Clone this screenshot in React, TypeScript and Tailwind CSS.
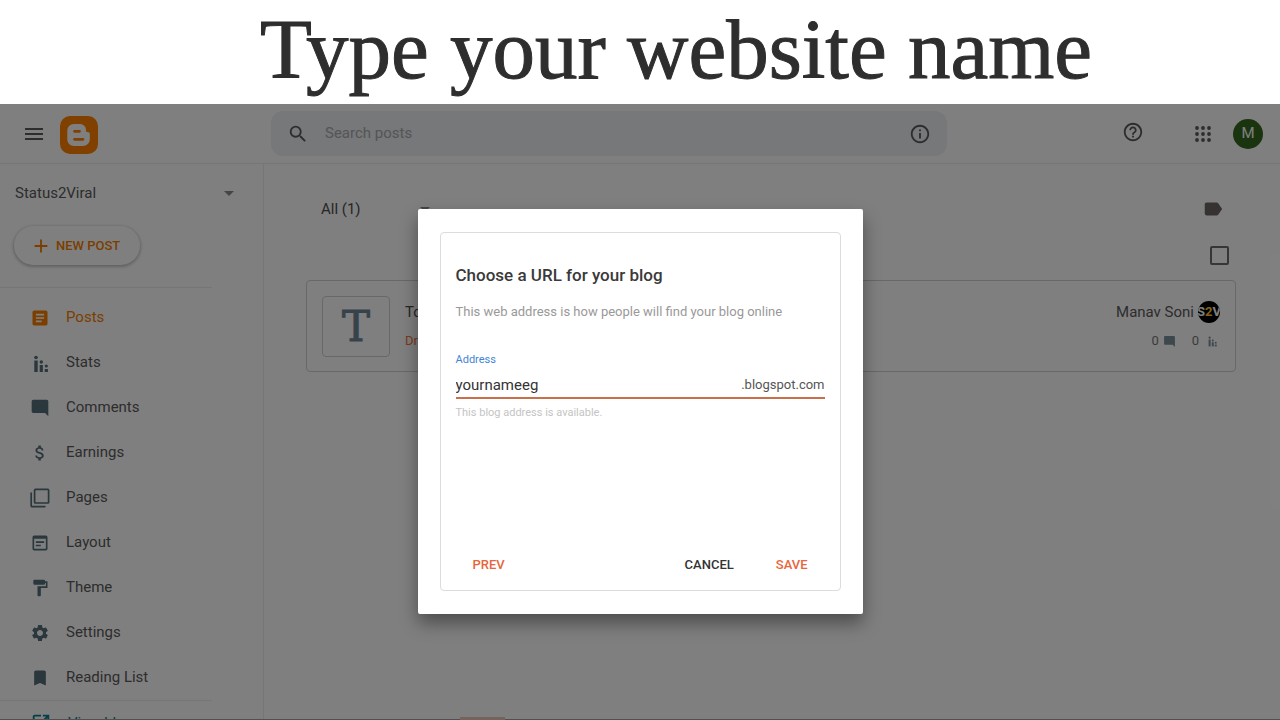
import {
  MdAdd,
  MdArrowDropDown,
  MdArticle,
  MdAttachMoney,
  MdBookmark,
  MdFormatPaint,
  MdHelpOutline,
  MdInfoOutline,
  MdLabel,
  MdMenu,
  MdModeComment,
  MdOpenInNew,
  MdSearch,
  MdSettings,
  MdWysiwyg,
} from "react-icons/md";

type IconProps = { className?: string };

function StatsIcon({ className }: IconProps) {
  return (
    <svg viewBox="0 0 20 20" fill="currentColor" className={className} aria-hidden="true">
      <circle cx="6" cy="4.500" r="1.8" />
      <rect x="4.300" y="7.500" width="3.400" height="11.500" />
      <circle cx="11.300" cy="9" r="1.700" />
      <rect x="9.700" y="12" width="3.200" height="7" />
      <circle cx="16.300" cy="13" r="1.600" />
      <rect x="14.700" y="16" width="3.200" height="3" />
    </svg>
  );
}

function PagesIcon({ className }: IconProps) {
  return (
    <svg viewBox="0 0 20 20" fill="none" stroke="currentColor" strokeWidth="1.7" className={className} aria-hidden="true">
      <rect x="4.6" y="1.4" width="14" height="13.6" rx="0.8" />
      <path d="M1.2 4.5v13.2a1 1 0 0 0 1 1H15.5" />
    </svg>
  );
}

function AppsIcon({ className }: IconProps) {
  const dots = [2, 8, 14];
  return (
    <svg viewBox="0 0 16 16" fill="currentColor" className={className} aria-hidden="true">
      {dots.map((cy) => dots.map((cx) => <circle key={`${cx}-${cy}`} cx={cx} cy={cy} r="1.9" />))}
    </svg>
  );
}

function BloggerLogo({ className }: IconProps) {
  return (
    <svg viewBox="0 0 38 38" className={className} aria-hidden="true">
      <rect width="38" height="38" rx="10" fill="#ff8000" />
      <path
        d="M14 8h5.500c4 0 6.500 2.500 6.500 6v.5c0 1 .6 1.500 1.500 1.500 1.400 0 2.300 .8 2.300 2V23c0 4-3 7-7 7H14c-4 0-6.700-3-6.700-7v-8c0-4 2.700-7 6.700-7z"
        fill="#fff"
      />
      <path d="M14.500 15.300h5M14.500 23.300h8.500" stroke="#ff8000" strokeWidth="2.800" strokeLinecap="round" />
    </svg>
  );
}

const navItems = [
  { label: "Posts", icon: MdArticle, active: true },
  { label: "Stats", icon: StatsIcon },
  { label: "Comments", icon: MdModeComment },
  { label: "Earnings", icon: MdAttachMoney },
  { label: "Pages", icon: PagesIcon },
  { label: "Layout", icon: MdWysiwyg },
  { label: "Theme", icon: MdFormatPaint },
  { label: "Settings", icon: MdSettings },
  { label: "Reading List", icon: MdBookmark },
];

function Header() {
  return (
    <header className="flex h-15 shrink-0 items-center border-b border-[#ececec]">
      <div className="flex w-[271px] shrink-0 items-center pl-[22px] text-[#5a5a5a]">
        <button type="button" aria-label="Menu">
          <MdMenu className="size-6" />
        </button>
        <BloggerLogo className="mt-[3px] ml-[14px] size-[38px]" />
      </div>
      <form className="flex h-[45px] flex-1 items-center rounded-xl bg-[#edf0f4] px-4 text-[#5a5a5a]">
        <MdSearch className="size-[22px]" />
        <input
          type="text"
          aria-label="Search posts"
          placeholder="Search posts"
          className="ml-4 min-w-0 flex-1 bg-transparent text-[15px] outline-none placeholder:text-[#aaaaaa]"
        />
        <button type="button" aria-label="Search info">
          <MdInfoOutline className="size-[22px]" />
        </button>
      </form>
      <div className="flex w-[333px] shrink-0 items-center justify-end pr-[17px] text-[#5a5a5a]">
        <button type="button" aria-label="Help" className="mb-1">
          <MdHelpOutline className="size-[22px]" />
        </button>
        <button type="button" aria-label="Google apps" className="ml-[51px]">
          <AppsIcon className="size-4" />
        </button>
        <button type="button" className="ml-[22px] size-[30px] rounded-full bg-[#33691e] text-[15px] text-white">
          M
        </button>
      </div>
    </header>
  );
}

function Sidebar() {
  return (
    <aside className="w-[264px] shrink-0 border-r border-[#ececec]">
      <button type="button" className="mt-[17px] flex h-6 w-full items-center justify-between pr-[22px] pl-[15px] text-[15px] text-[#5a5a5a]">
        Status2Viral
        <MdArrowDropDown className="size-6 text-[#8a8a8a]" />
      </button>
      <button
        type="button"
        className="mt-[21px] ml-[14px] flex h-[39px] items-center rounded-full pr-5 pl-4 text-[13px] font-medium text-[#f57c00] shadow-[0_1px_3px_1px_rgba(60,64,67,0.3)]"
      >
        <MdAdd className="mr-1 size-[22px]" />
        NEW POST
      </button>
      <nav className="mt-[22px] w-[212px] border-t border-[#ececec] pt-[7px]">
        {navItems.map(({ label, icon: Icon, active }) => (
          <a
            key={label}
            href="#"
            className={`flex h-[45px] items-center pl-[30px] text-[15px] ${active ? "text-[#f57c00]" : "text-[#5a5a5a]"}`}
          >
            <Icon className={`mr-4 size-5 ${active ? "text-[#f57c00]" : "text-[#546e7a]"}`} />
            {label}
          </a>
        ))}
        <a href="#" className="flex h-[45px] items-center border-t border-[#ececec] pl-[30px] text-[15px] text-[#00838f]">
          <MdOpenInNew className="mr-4 size-[22px]" />
          View blog
        </a>
      </nav>
    </aside>
  );
}

function PostCard() {
  return (
    <article className="flex h-[92px] items-center justify-between rounded border border-[#d0d0d0] px-[15px]">
      <div className="flex items-center">
        <div className="flex h-[61px] w-[68px] items-center justify-center rounded border border-[#d0d0d0] font-['DejaVu_Serif',serif] text-[42px] text-[#6f8797] [-webkit-text-stroke:1px_#6f8797]">
          T
        </div>
        <div className="ml-[15px]">
          <h2 className="text-[15px] leading-[30px] text-[#4d4d4d]">To</h2>
          <p className="text-[13px] leading-7 text-[#f4743b]">Dr</p>
        </div>
      </div>
      <div>
        <div className="flex h-[30px] items-center text-[15px] text-[#5a5a5a]">
          Manav Soni
          <span className="ml-1 flex size-[22px] items-center justify-center overflow-hidden rounded-full bg-black text-[13px] font-bold text-white">
            S<span className="text-[#ffc83d]">2</span>V
          </span>
        </div>
        <div className="flex h-7 items-center justify-end pr-[2px] text-[13px] text-[#777777]">
          0<MdModeComment className="ml-1 size-[13px] text-[#78909c]" />
          <span className="ml-4">0</span>
          <StatsIcon className="ml-[7px] size-3 text-[#78909c]" />
        </div>
      </div>
    </article>
  );
}

function UrlDialog() {
  return (
    <div
      role="dialog"
      aria-labelledby="dialog-title"
      className="w-[445px] rounded-[2px] bg-white px-[22px] py-[23px] shadow-[0_9px_18px_0_rgba(0,0,0,0.4)]"
    >
      <form className="flex flex-col rounded border border-[#dadce0] px-[15px] pt-[30px] pb-[7px]">
        <h2 id="dialog-title" className="text-[17px] leading-6 font-medium text-[#3a3a3a]">
          Choose a URL for your blog
        </h2>
        <p className="mt-[15px] text-[13px] leading-5 text-[#999999]">
          This web address is how people will find your blog online
        </p>
        <label htmlFor="address" className="mt-[30px] text-[11px] leading-4 text-[#4285d6]">
          Address
        </label>
        <div className="mt-[5px] flex items-center border-b-2 border-[#c8704a] leading-6">
          <input
            id="address"
            type="text"
            defaultValue="yournameeg"
            className="h-6 min-w-0 flex-1 bg-transparent text-[15px] text-[#333333] outline-none"
          />
          <span className="text-[13px] leading-6 text-[#555555]">.blogspot.com</span>
        </div>
        <p className="mt-[6px] text-[11px] leading-4 text-[#c4c4c4]">This blog address is available.</p>
        <div className="mt-[126px] flex h-9 items-center gap-2 text-[13px] font-medium text-[#e8663c]">
          <button type="button" className="mr-auto h-9 px-[17px]">
            PREV
          </button>
          <button type="button" className="h-9 px-[17px] text-[#333333]">
            CANCEL
          </button>
          <button type="submit" className="h-9 px-[17px]">
            SAVE
          </button>
        </div>
      </form>
    </div>
  );
}

export default function App() {
  return (
    <div className="flex h-screen flex-col overflow-hidden bg-white font-[Roboto,sans-serif]">
      <h1 className="h-[104px] shrink-0 pl-[72px] text-center font-['Liberation_Serif',serif] text-[85px] leading-[98px] text-[#2e2e2e] [-webkit-text-stroke:1px_#2e2e2e]">
        Type your website name
      </h1>
      <div className="relative flex min-h-0 flex-1 flex-col overflow-hidden">
        <Header />
        <div className="flex min-h-0 flex-1">
          <Sidebar />
          <main className="flex-1 pr-11 pl-[42px]">
            <div className="mt-[33px] flex h-6 items-center justify-between pr-3 pl-[15px] text-[15px] text-[#4d4d4d]">
              <button type="button" className="flex w-[116px] items-center justify-between">
                All (1)
                <MdArrowDropDown className="size-6 text-[#8a8a8a]" />
              </button>
              <MdLabel className="size-[22px] text-[#6d6464]" />
            </div>
            <div className="mt-[25px] mb-[15px] flex justify-end pr-[7px]">
              <input
                type="checkbox"
                aria-label="Select all posts"
                className="size-[19px] appearance-none rounded-[2px] border-2 border-[#6d6d6d]"
              />
            </div>
            <PostCard />
          </main>
        </div>
        <div className="absolute inset-x-0 bottom-0 flex h-[3px] items-end">
          <div className="h-px w-[460px] bg-[#a0a0a0]" />
          <div className="h-[3px] w-[45px] bg-[#e8c9bd]" />
          <div className="h-px flex-1 bg-[#a0a0a0]" />
        </div>
        <div className="absolute inset-0 flex items-center justify-center bg-black/50 pb-px">
          <UrlDialog />
        </div>
      </div>
    </div>
  );
}
